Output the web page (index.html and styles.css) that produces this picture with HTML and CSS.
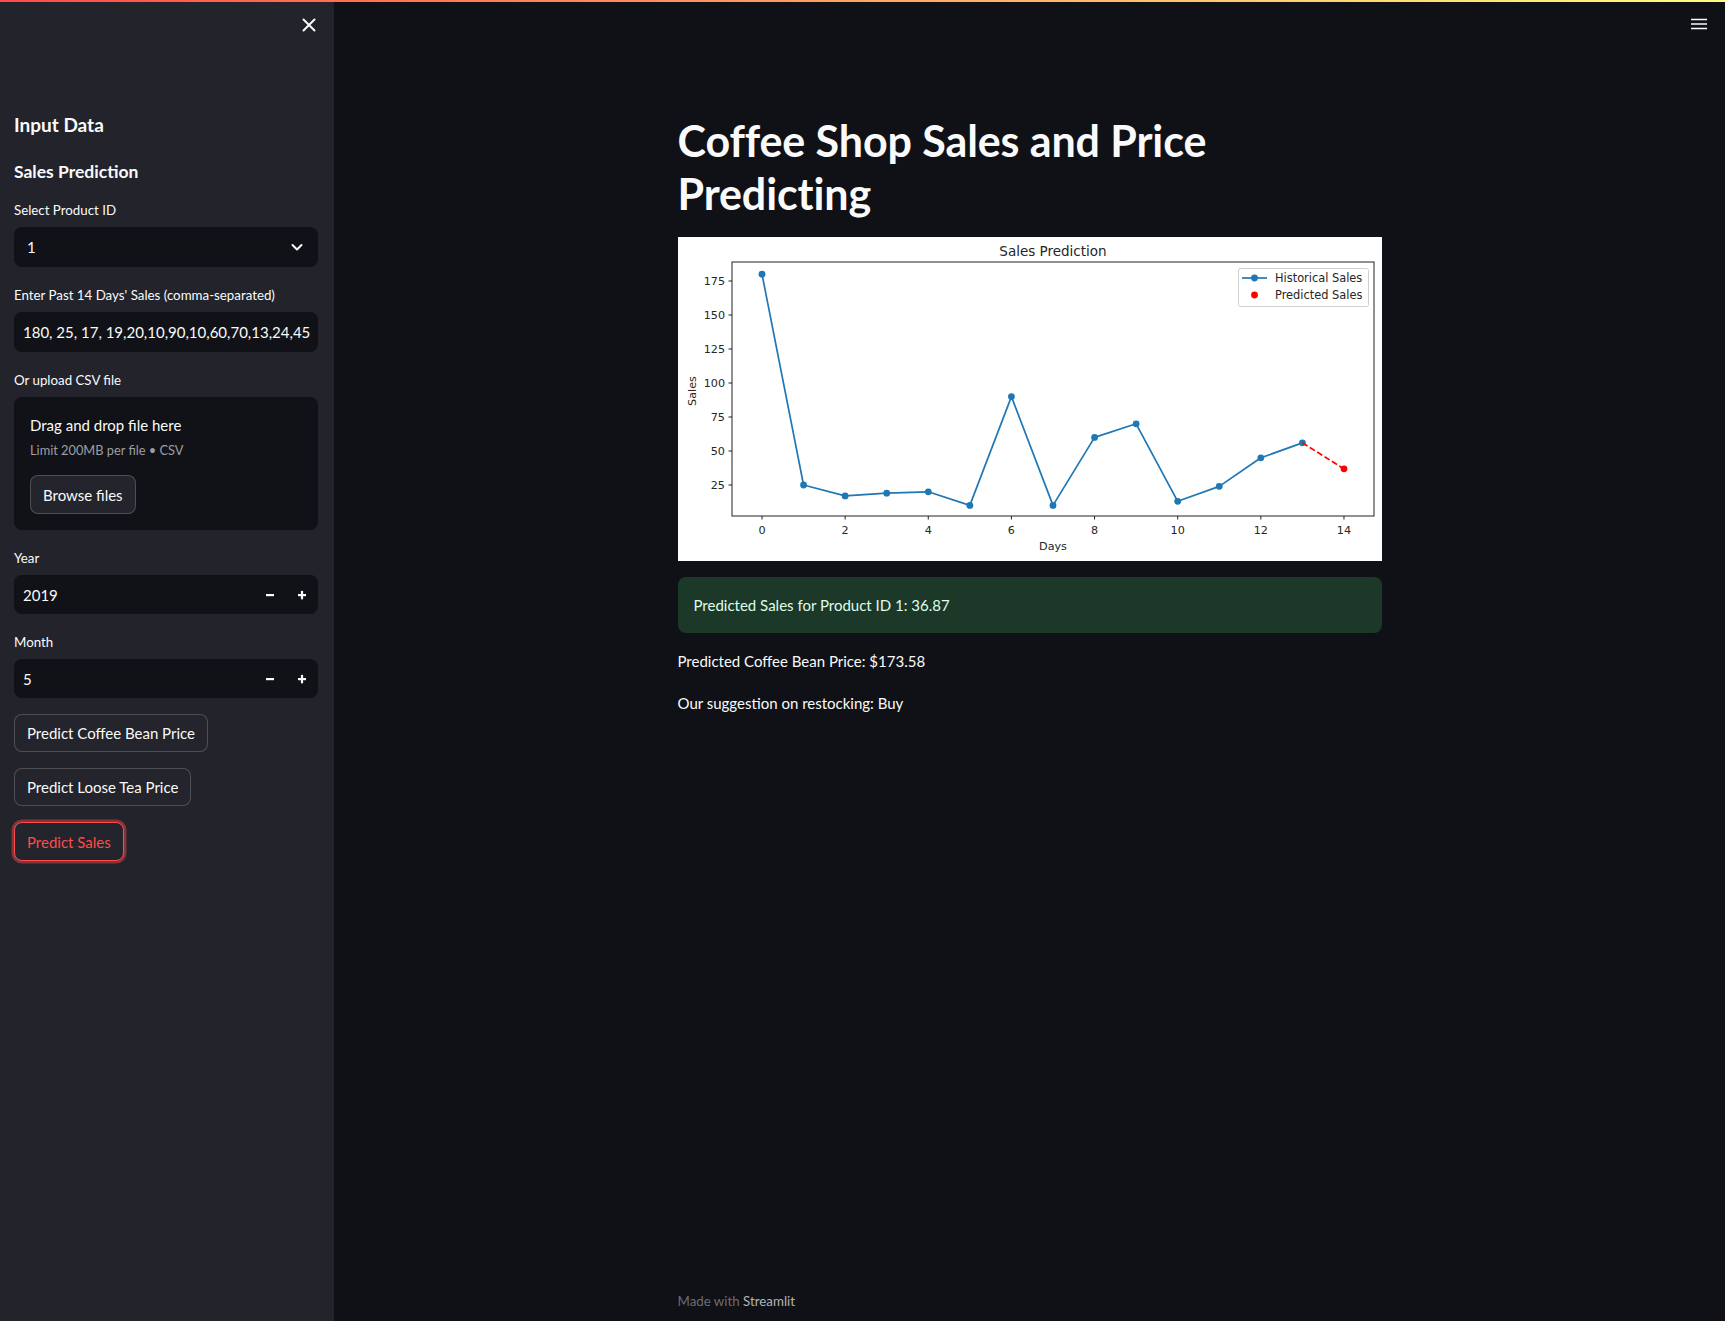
FILE: index.html
```html
<!DOCTYPE html>
<html lang="en">
<head>
<meta charset="utf-8">
<title>Coffee Shop Sales and Price Predicting</title>
<link rel="stylesheet" href="styles.css">
</head>
<body>
<div class="decoration"></div>
<div class="app">
  <aside class="sidebar">
    <div class="sb-top">
      <button class="icon-btn" aria-label="Close sidebar">
        <svg width="24" height="24" viewBox="0 0 24 24"><path d="M6.5 6.5 L17.5 17.5 M17.5 6.5 L6.5 17.5" stroke="#fafafa" stroke-width="2" stroke-linecap="round" fill="none"/></svg>
      </button>
    </div>
    <div class="sb-content">
      <h2 class="sb-h1">Input Data</h2>
      <h3 class="sb-h2">Sales Prediction</h3>

      <div class="widget first">
        <div class="label">Select Product ID</div>
        <div class="field select">
          <span class="val">1</span>
          <svg class="chev" width="16" height="16" viewBox="0 0 16 16"><path d="M3.5 6 L8 10.5 L12.5 6" stroke="#fafafa" stroke-width="2" fill="none" stroke-linecap="round" stroke-linejoin="round"/></svg>
        </div>
      </div>

      <div class="widget">
        <div class="label">Enter Past 14 Days' Sales (comma-separated)</div>
        <div class="field text">
          <input class="txt-input" type="text" readonly value="180, 25, 17, 19,20,10,90,10,60,70,13,24,45,56">
        </div>
      </div>

      <div class="widget">
        <div class="label">Or upload CSV file</div>
        <div class="uploader">
          <div class="up-title">Drag and drop file here</div>
          <div class="up-sub">Limit 200MB per file • CSV</div>
          <button class="btn browse">Browse files</button>
        </div>
      </div>

      <div class="widget">
        <div class="label">Year</div>
        <div class="field number">
          <span class="num-val">2019</span>
          <span class="step"><svg width="10" height="10" viewBox="0 0 10 10"><rect x="1" y="4" width="8" height="2.2" fill="#fafafa"/></svg></span>
          <span class="step"><svg width="10" height="10" viewBox="0 0 10 10"><rect x="1" y="4" width="8" height="2.2" fill="#fafafa"/><rect x="3.9" y="0.9" width="2.2" height="8.4" fill="#fafafa"/></svg></span>
        </div>
      </div>

      <div class="widget">
        <div class="label">Month</div>
        <div class="field number">
          <span class="num-val">5</span>
          <span class="step"><svg width="10" height="10" viewBox="0 0 10 10"><rect x="1" y="4" width="8" height="2.2" fill="#fafafa"/></svg></span>
          <span class="step"><svg width="10" height="10" viewBox="0 0 10 10"><rect x="1" y="4" width="8" height="2.2" fill="#fafafa"/><rect x="3.9" y="0.9" width="2.2" height="8.4" fill="#fafafa"/></svg></span>
        </div>
      </div>

      <div class="btn-row"><button class="btn">Predict Coffee Bean Price</button></div>
      <div class="btn-row"><button class="btn">Predict Loose Tea Price</button></div>
      <div class="btn-row"><button class="btn active">Predict Sales</button></div>
    </div>
  </aside>

  <main class="main">
    <button class="menu" aria-label="Menu">
      <svg width="24" height="24" viewBox="0 0 24 24"><path d="M4 7.5 H20 M4 12 H20 M4 16.5 H20" stroke="#fafafa" stroke-width="1.6" fill="none"/></svg>
    </button>
    <div class="block">
      <h1 class="title">Coffee Shop Sales and Price Predicting</h1>

      <figure class="chart">
        <svg width="704" height="324" viewBox="0 0 704 324" class="plot">
          <rect x="0" y="0" width="704" height="324" fill="#ffffff"/>
          <text x="375" y="19" class="t-title" text-anchor="middle">Sales Prediction</text>
          <g class="ticks" stroke="#222" stroke-width="1">
            <line x1="50.5" x2="54" y1="248" y2="248"/>
            <line x1="50.5" x2="54" y1="214" y2="214"/>
            <line x1="50.5" x2="54" y1="180" y2="180"/>
            <line x1="50.5" x2="54" y1="146" y2="146"/>
            <line x1="50.5" x2="54" y1="112" y2="112"/>
            <line x1="50.5" x2="54" y1="78" y2="78"/>
            <line x1="50.5" x2="54" y1="44" y2="44"/>
            <line y1="279" y2="282.5" x1="84" x2="84"/>
            <line y1="279" y2="282.5" x1="167.14" x2="167.14"/>
            <line y1="279" y2="282.5" x1="250.28" x2="250.28"/>
            <line y1="279" y2="282.5" x1="333.42" x2="333.42"/>
            <line y1="279" y2="282.5" x1="416.56" x2="416.56"/>
            <line y1="279" y2="282.5" x1="499.7" x2="499.7"/>
            <line y1="279" y2="282.5" x1="582.84" x2="582.84"/>
            <line y1="279" y2="282.5" x1="665.98" x2="665.98"/>
          </g>
          <g class="t-tick" text-anchor="end">
            <text x="47" y="252">25</text>
            <text x="47" y="218">50</text>
            <text x="47" y="184">75</text>
            <text x="47" y="150">100</text>
            <text x="47" y="116">125</text>
            <text x="47" y="82">150</text>
            <text x="47" y="48">175</text>
          </g>
          <g class="t-tick" text-anchor="middle">
            <text x="84" y="297">0</text>
            <text x="167.14" y="297">2</text>
            <text x="250.28" y="297">4</text>
            <text x="333.42" y="297">6</text>
            <text x="416.56" y="297">8</text>
            <text x="499.7" y="297">10</text>
            <text x="582.84" y="297">12</text>
            <text x="665.98" y="297">14</text>
          </g>
          <text x="375" y="313" class="t-tick" text-anchor="middle">Days</text>
          <text x="0" y="0" class="t-tick" text-anchor="middle" transform="translate(18 154) rotate(-90)">Sales</text>

          <polyline fill="none" stroke="#1f77b4" stroke-width="1.7" stroke-linejoin="round"
            points="84,37.2 125.57,248 167.14,258.88 208.71,256.16 250.28,254.8 291.85,268.4 333.42,159.6 374.99,268.4 416.56,200.4 458.13,186.8 499.7,264.32 541.27,249.36 582.84,220.8 624.41,205.84"/>
          <g fill="#1f77b4">
            <circle cx="84" cy="37.2" r="3.4"/>
            <circle cx="125.57" cy="248" r="3.4"/>
            <circle cx="167.14" cy="258.88" r="3.4"/>
            <circle cx="208.71" cy="256.16" r="3.4"/>
            <circle cx="250.28" cy="254.8" r="3.4"/>
            <circle cx="291.85" cy="268.4" r="3.4"/>
            <circle cx="333.42" cy="159.6" r="3.4"/>
            <circle cx="374.99" cy="268.4" r="3.4"/>
            <circle cx="416.56" cy="200.4" r="3.4"/>
            <circle cx="458.13" cy="186.8" r="3.4"/>
            <circle cx="499.7" cy="264.32" r="3.4"/>
            <circle cx="541.27" cy="249.36" r="3.4"/>
            <circle cx="582.84" cy="220.8" r="3.4"/>
            <circle cx="624.41" cy="205.84" r="3.4"/>
          </g>
          <line x1="624.41" y1="205.84" x2="665.98" y2="231.86" stroke="#ff0000" stroke-width="1.7" stroke-dasharray="6 2.7"/>
          <circle cx="665.98" cy="231.86" r="3.4" fill="#ff0000"/>

          <rect x="54" y="25" width="642" height="254" fill="none" stroke="#222" stroke-width="1"/>

          <rect x="560.5" y="31.5" width="130" height="38" rx="2" fill="#ffffff" fill-opacity="0.85" stroke="#d0d0d0" stroke-width="1"/>
          <line x1="564" y1="41" x2="589" y2="41" stroke="#1f77b4" stroke-width="1.7"/>
          <circle cx="576.5" cy="41" r="3.4" fill="#1f77b4"/>
          <circle cx="576.5" cy="58" r="3.4" fill="#ff0000"/>
          <text x="597" y="45" class="t-leg">Historical Sales</text>
          <text x="597" y="62" class="t-leg">Predicted Sales</text>
        </svg>
      </figure>

      <div class="alert">Predicted Sales for Product ID 1: 36.87</div>
      <p class="para first-p">Predicted Coffee Bean Price: $173.58</p>
      <p class="para">Our suggestion on restocking: Buy</p>
    </div>
    <footer class="footer">Made with <span class="brand">Streamlit</span></footer>
  </main>
</div>
</body>
</html>
```
FILE: styles.css
```css
* { box-sizing: border-box; }
html, body { margin: 0; padding: 0; }
body {
  background: #0f1116;
  color: #fafafa;
  font-family: Lato, "Noto Sans", "Liberation Sans", sans-serif;
  width: 1725px;
  height: 1321px;
  overflow: hidden;
}
button, input { font-family: inherit; }

.decoration {
  position: absolute;
  top: 0; left: 0; right: 0;
  height: 2px;
  background: linear-gradient(90deg, #ff4b4b, #fffd80);
  z-index: 10;
}

.app { display: flex; height: 1321px; }

/* Sidebar */
.sidebar {
  width: 334px;
  flex: none;
  background: #22232b;
  height: 100%;
}
.sb-top {
  display: flex;
  justify-content: flex-end;
  padding: 13px 13px 0;
}
.icon-btn {
  width: 24px; height: 24px;
  padding: 0; border: 0; background: none;
  display: flex;
}
.sb-content {
  display: flex;
  flex-direction: column;
  gap: 16px;
  padding: 0 16px 0 14px;
}
.sb-h1 {
  margin: 76px 0 0;
  font-size: 19px;
  line-height: 24px;
  font-weight: 700;
}
.sb-h2 {
  margin: 7px 0 0;
  font-size: 17.5px;
  line-height: 24px;
  font-weight: 700;
}
.widget { display: flex; flex-direction: column; }
.widget.first { margin-top: -2px; }
.label {
  font-size: 13.3px;
  line-height: 24px;
  margin-bottom: 5px;
}
.field {
  background: #111217;
  border-radius: 8px;
  height: 40px;
  display: flex;
  align-items: center;
  font-size: 15px;
}
.select { padding: 0 13px 0 13px; justify-content: space-between; }
.text { padding: 0 8px 0 9px; }
.txt-input {
  width: 100%;
  border: 0;
  padding: 0;
  margin: 0;
  background: transparent;
  color: #fafafa;
  font-size: 15px;
  outline: none;
}
.number { height: 39px; padding-left: 9px; }
.num-val { flex: 1; }
.step {
  width: 32px; height: 39px;
  display: flex; align-items: center; justify-content: center;
}

.uploader {
  background: #111217;
  border-radius: 8px;
  height: 133px;
  padding: 16px;
  display: flex;
  flex-direction: column;
  align-items: flex-start;
}
.up-title { font-size: 15px; line-height: 24px; }
.up-sub { font-size: 12.8px; line-height: 20px; color: #9d9ea3; margin-top: 3px; }

.btn {
  background: #23242c;
  color: #fafafa;
  border: 1px solid rgba(250,250,250,0.2);
  border-radius: 8px;
  font-size: 15px;
  height: 38px;
  padding: 0 12px;
  line-height: 24px;
}
.browse { margin-top: 15px; height: 39px; }
.btn-row { display: flex; }
.btn.active {
  color: #ff4b4b;
  border-color: #ff4b4b;
  height: 39px;
  box-shadow: 0 0 0 2.5px rgba(255,75,75,0.45);
}

/* Main */
.main {
  flex: 1;
  display: flex;
  flex-direction: column;
  position: relative;
}
.menu {
  position: absolute;
  top: 12px; right: 14px;
  width: 24px; height: 24px;
  padding: 0; border: 0; background: none;
  display: flex;
}
.block {
  width: 704px;
  margin: 0 auto;
  padding-top: 114px;
  display: flex;
  flex-direction: column;
}
.title {
  margin: 0;
  font-size: 43px;
  line-height: 53px;
  font-weight: 700;
  letter-spacing: -0.1px;
}
.chart { margin: 17px 0 0; height: 324px; }
.plot { display: block; }
.t-title { font-family: "DejaVu Sans", sans-serif; font-size: 13.5px; fill: #262626; }
.t-tick { font-family: "DejaVu Sans", sans-serif; font-size: 11.2px; fill: #262626; }
.t-leg { font-family: "DejaVu Sans", sans-serif; font-size: 11.4px; fill: #262626; }

.alert {
  margin-top: 16px;
  background: #1c3829;
  color: #dffde9;
  border-radius: 8px;
  padding: 16px;
  font-size: 15px;
  line-height: 24px;
}
.para {
  margin: 18px 0 0;
  font-size: 15px;
  line-height: 24px;
}
.para.first-p { margin-top: 16px; }

.footer {
  margin-top: auto;
  width: 704px;
  align-self: center;
  padding-bottom: 10px;
  font-size: 13.3px;
  line-height: 20px;
  color: #6c6d72;
}
.brand { color: #b3b4b8; }
```
